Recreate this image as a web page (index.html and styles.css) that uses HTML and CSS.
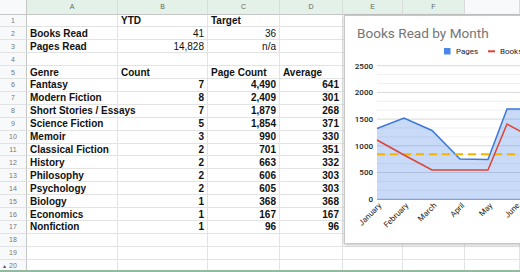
FILE: index.html
```html
<!DOCTYPE html>
<html lang="en">
<head>
  <meta charset="UTF-8" />
  <title>Reading log 2024</title>
  <link rel="stylesheet" href="styles.css">
</head>
<body>
  <div class="sheet">
    <!-- column headers -->
    <div class="corner"></div>
    <div class="col-head sel">A</div>
    <div class="col-head sel">B</div>
    <div class="col-head sel">C</div>
    <div class="col-head sel">D</div>
    <div class="col-head sel">E</div>
    <div class="col-head sel">F</div>
    <div class="col-head"></div>

    <div class="row-head">1</div>
    <div class="cell"></div><div class="cell b">YTD</div><div class="cell b">Target</div><div class="cell"></div><div class="cell"></div><div class="cell"></div><div class="cell"></div>

    <div class="row-head">2</div>
    <div class="cell b">Books Read</div><div class="cell r">41</div><div class="cell r">36</div><div class="cell"></div><div class="cell"></div><div class="cell"></div><div class="cell"></div>

    <div class="row-head">3</div>
    <div class="cell b">Pages Read</div><div class="cell r">14,828</div><div class="cell r">n/a</div><div class="cell"></div><div class="cell"></div><div class="cell"></div><div class="cell"></div>

    <div class="row-head">4</div>
    <div class="cell"></div><div class="cell"></div><div class="cell"></div><div class="cell"></div><div class="cell"></div><div class="cell"></div><div class="cell"></div>

    <div class="row-head">5</div>
    <div class="cell b">Genre</div><div class="cell b">Count</div><div class="cell b">Page Count</div><div class="cell b">Average</div><div class="cell"></div><div class="cell"></div><div class="cell"></div>

    <div class="row-head">6</div>
    <div class="cell b">Fantasy</div><div class="cell b r">7</div><div class="cell b r">4,490</div><div class="cell b r">641</div><div class="cell"></div><div class="cell"></div><div class="cell"></div>

    <div class="row-head">7</div>
    <div class="cell b">Modern Fiction</div><div class="cell b r">8</div><div class="cell b r">2,409</div><div class="cell b r">301</div><div class="cell"></div><div class="cell"></div><div class="cell"></div>

    <div class="row-head">8</div>
    <div class="cell b">Short Stories / Essays</div><div class="cell b r">7</div><div class="cell b r">1,879</div><div class="cell b r">268</div><div class="cell"></div><div class="cell"></div><div class="cell"></div>

    <div class="row-head">9</div>
    <div class="cell b">Science Fiction</div><div class="cell b r">5</div><div class="cell b r">1,854</div><div class="cell b r">371</div><div class="cell"></div><div class="cell"></div><div class="cell"></div>

    <div class="row-head">10</div>
    <div class="cell b">Memoir</div><div class="cell b r">3</div><div class="cell b r">990</div><div class="cell b r">330</div><div class="cell"></div><div class="cell"></div><div class="cell"></div>

    <div class="row-head">11</div>
    <div class="cell b">Classical Fiction</div><div class="cell b r">2</div><div class="cell b r">701</div><div class="cell b r">351</div><div class="cell"></div><div class="cell"></div><div class="cell"></div>

    <div class="row-head">12</div>
    <div class="cell b">History</div><div class="cell b r">2</div><div class="cell b r">663</div><div class="cell b r">332</div><div class="cell"></div><div class="cell"></div><div class="cell"></div>

    <div class="row-head">13</div>
    <div class="cell b">Philosophy</div><div class="cell b r">2</div><div class="cell b r">606</div><div class="cell b r">303</div><div class="cell"></div><div class="cell"></div><div class="cell"></div>

    <div class="row-head">14</div>
    <div class="cell b">Psychology</div><div class="cell b r">2</div><div class="cell b r">605</div><div class="cell b r">303</div><div class="cell"></div><div class="cell"></div><div class="cell"></div>

    <div class="row-head">15</div>
    <div class="cell b">Biology</div><div class="cell b r">1</div><div class="cell b r">368</div><div class="cell b r">368</div><div class="cell"></div><div class="cell"></div><div class="cell"></div>

    <div class="row-head">16</div>
    <div class="cell b">Economics</div><div class="cell b r">1</div><div class="cell b r">167</div><div class="cell b r">167</div><div class="cell"></div><div class="cell"></div><div class="cell"></div>

    <div class="row-head">17</div>
    <div class="cell b">Nonfiction</div><div class="cell b r">1</div><div class="cell b r">96</div><div class="cell b r">96</div><div class="cell"></div><div class="cell"></div><div class="cell"></div>

    <div class="row-head">18</div>
    <div class="cell"></div><div class="cell"></div><div class="cell"></div><div class="cell"></div><div class="cell"></div><div class="cell"></div><div class="cell"></div>

    <div class="row-head">19</div>
    <div class="cell"></div><div class="cell"></div><div class="cell"></div><div class="cell"></div><div class="cell"></div><div class="cell"></div><div class="cell"></div>

    <div class="row-head"><span class="grp">&#9652;</span>20</div>
    <div class="cell"></div><div class="cell"></div><div class="cell"></div><div class="cell"></div><div class="cell"></div><div class="cell"></div><div class="cell"></div>
  </div>

  <!-- floating chart -->
  <div class="chart">
    <svg width="200" height="228" viewBox="345 16 200 228">
      <text class="chart-title" x="357" y="38">Books Read by Month</text>

      <rect x="444" y="48" width="6.5" height="6.5" fill="#4a86e8"/>
      <text class="legend" x="456" y="54">Pages</text>
      <line x1="488" y1="51.3" x2="495" y2="51.3" stroke="#db4437" stroke-width="2"/>
      <text class="legend" x="500" y="54">Books</text>

      <!-- minor gridlines -->
      <g stroke="#efefef" stroke-width="1">
        <line x1="377" y1="74.6" x2="545" y2="74.6"/>
        <line x1="377" y1="83.5" x2="545" y2="83.5"/>
        <line x1="377" y1="101.3" x2="545" y2="101.3"/>
        <line x1="377" y1="110.2" x2="545" y2="110.2"/>
        <line x1="377" y1="128.0" x2="545" y2="128.0"/>
        <line x1="377" y1="136.9" x2="545" y2="136.9"/>
        <line x1="377" y1="154.7" x2="545" y2="154.7"/>
        <line x1="377" y1="163.6" x2="545" y2="163.6"/>
        <line x1="377" y1="181.4" x2="545" y2="181.4"/>
        <line x1="377" y1="190.3" x2="545" y2="190.3"/>
      </g>
      <!-- major gridlines -->
      <g stroke="#d9d9d9" stroke-width="1">
        <line x1="377" y1="65.7" x2="545" y2="65.7"/>
        <line x1="377" y1="92.4" x2="545" y2="92.4"/>
        <line x1="377" y1="119.1" x2="545" y2="119.1"/>
        <line x1="377" y1="145.8" x2="545" y2="145.8"/>
        <line x1="377" y1="172.5" x2="545" y2="172.5"/>
      </g>

      <!-- pages area -->
      <polygon points="377,128.5 404,118 432,130.5 460,159 488,159.5 507,109 545,109 545,199.3 377,199.3" fill="#4a86e8" fill-opacity="0.3"/>
      <polyline points="377,128.5 404,118 432,130.5 460,159 488,159.5 507,109 545,109" fill="none" stroke="#3c78d8" stroke-width="1.5"/>
      <line x1="377" y1="199.3" x2="545" y2="199.3" stroke="#6d8fc4" stroke-width="1"/>

      <!-- target -->
      <line x1="377" y1="154.3" x2="545" y2="154.3" stroke="#f6b400" stroke-width="2" stroke-dasharray="8 5"/>

      <!-- books -->
      <polyline points="377,140 404,155 432,170 460,170 488,170 507,124 520,131 545,140" fill="none" stroke="#db4437" stroke-width="1.5"/>

      <g class="axis">
        <text x="373" y="68.5">2500</text>
        <text x="373" y="95.2">2000</text>
        <text x="373" y="121.9">1500</text>
        <text x="373" y="148.6">1000</text>
        <text x="373" y="175.3">500</text>
        <text x="373" y="202">0</text>
      </g>

      <g class="months">
        <text transform="translate(382,206) rotate(-45)">January</text>
        <text transform="translate(409,206) rotate(-45)">February</text>
        <text transform="translate(437,206) rotate(-45)">March</text>
        <text transform="translate(465,206) rotate(-45)">April</text>
        <text transform="translate(493,206) rotate(-45)">May</text>
        <text transform="translate(520,206) rotate(-45)">June</text>
      </g>
    </svg>
  </div>
</body>
</html>
```

FILE: styles.css
```css
body {
  margin: 0;
  width: 520px;
  height: 272px;
  overflow: hidden;
  position: relative;
  background: #fff;
  font-family: 'Liberation Sans', Arial, sans-serif;
}

.sheet {
  display: grid;
  grid-template-columns: 27px 91px 90px 72px 63px 60px 62px 1fr;
  grid-template-rows: 14.5px repeat(20, 12.92px);
  height: 270px;
  overflow: hidden;
  border-bottom: 2px solid #93b8a0;
}

.corner {
  background: #f8f9fa;
  border-right: 1px solid #c4c7c5;
  border-bottom: 1px solid #c4c7c5;
}

.col-head {
  background: #f8f9fa;
  border-right: 1px solid #dadcdc;
  border-bottom: 1px solid #c4c7c5;
  color: #6b6f72;
  font-size: 7px;
  display: flex;
  align-items: center;
  justify-content: center;
}

.col-head.sel {
  background: #e4f1e8;
  color: #5d6b62;
}

.row-head {
  background: #f8f9fa;
  border-right: 1px solid #c4c7c5;
  border-bottom: 1px solid #e1e3e3;
  color: #777;
  font-size: 7px;
  display: flex;
  align-items: center;
  justify-content: center;
  position: relative;
}

.row-head .grp {
  position: absolute;
  left: 3px;
  font-size: 6px;
  color: #555;
}

.cell {
  border-right: 1px solid #e2e3e3;
  border-bottom: 1px solid #e2e3e3;
  font-size: 10px;
  color: #111;
  padding: 0 3px;
  display: flex;
  align-items: center;
  white-space: nowrap;
  overflow: visible;
}

.cell.b {
  font-weight: bold;
}

.cell.r {
  justify-content: flex-end;
}

.chart {
  position: absolute;
  left: 344px;
  top: 15px;
  width: 200px;
  height: 227px;
  background: #fff;
  border: 1px solid #c8c8c8;
  box-shadow: 0 1px 3px rgba(0, 0, 0, 0.25);
}

.chart svg {
  display: block;
  font-family: Roboto, 'Liberation Sans', sans-serif;
}

.chart-title {
  font-size: 13.6px;
  fill: #757575;
}

.legend {
  font-size: 8px;
  fill: #222;
}

.axis text {
  font-size: 8px;
  font-weight: 500;
  fill: #222;
  text-anchor: end;
}

.months text {
  font-size: 8px;
  fill: #222;
  text-anchor: end;
}
```
